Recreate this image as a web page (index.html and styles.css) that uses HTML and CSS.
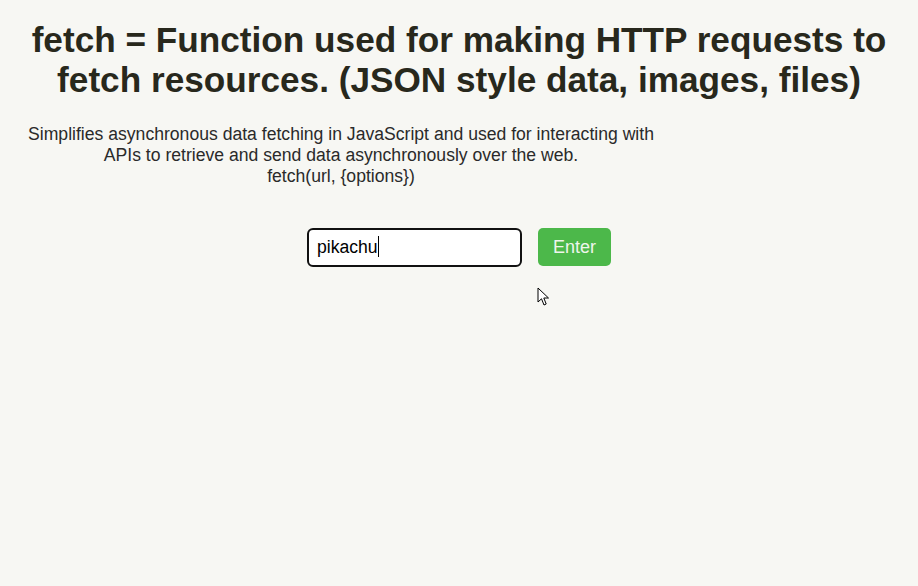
FILE: index.html
```html
<!DOCTYPE html>
<html>
<head>
<meta charset="utf-8">
<link rel="stylesheet" href="styles.css">
</head>
<body>
<h1 class="title">fetch = Function used for making HTTP requests to fetch resources. (JSON style data, images, files)</h1>
<p class="desc">Simplifies asynchronous data fetching in JavaScript and used for interacting with APIs to retrieve and send data asynchronously over the web.<br>fetch(url, {options})</p>
<div class="form">
  <div class="input">pikachu<span class="caret"></span></div>
  <button class="btn">Enter</button>
</div>
<svg class="pointer" width="13" height="20" viewBox="0 0 13 20"><path d="M1 1 L1 15 L4.5 11.8 L7 18 L9.2 17 L6.8 11 L11.5 11 Z" fill="#fff" stroke="#000" stroke-width="1" stroke-linejoin="miter"/></svg>
</body>
</html>
```
FILE: styles.css
```css
html, body {
  margin: 0;
  padding: 0;
  background: #f7f7f3;
}
body {
  padding: 8px;
  font-family: "Liberation Sans", Arial, sans-serif;
  position: relative;
  min-height: 570px;
  box-sizing: border-box;
}
.title {
  margin: 12px 0 0;
  font-size: 35.2px;
  line-height: 40px;
  font-weight: bold;
  color: #28281c;
  text-align: center;
}
.desc {
  width: 666px;
  margin: 24px 0 0;
  font-size: 17.6px;
  line-height: 21px;
  color: #2a2a2a;
  text-align: center;
}
.form {
  display: flex;
  justify-content: center;
  gap: 16px;
  margin-top: 41px;
}
.input {
  height: 35px;
  border: 2px solid #111;
  border-radius: 6px;
  background: #fff;
  font-size: 17.6px;
  line-height: 35px;
  padding-left: 8px;
  box-sizing: content-box;
  width: 203px;
  color: #000;
}
.caret {
  display: inline-block;
  width: 1px;
  height: 21px;
  background: #000;
  vertical-align: -4px;
}
.btn {
  width: 73px;
  height: 38px;
  border: none;
  border-radius: 5px;
  background: #4cb84a;
  color: #eef5ec;
  font-family: "Liberation Sans", Arial, sans-serif;
  font-size: 18px;
  padding: 0;
}
.pointer {
  position: absolute;
  left: 537px;
  top: 287px;
}
```
